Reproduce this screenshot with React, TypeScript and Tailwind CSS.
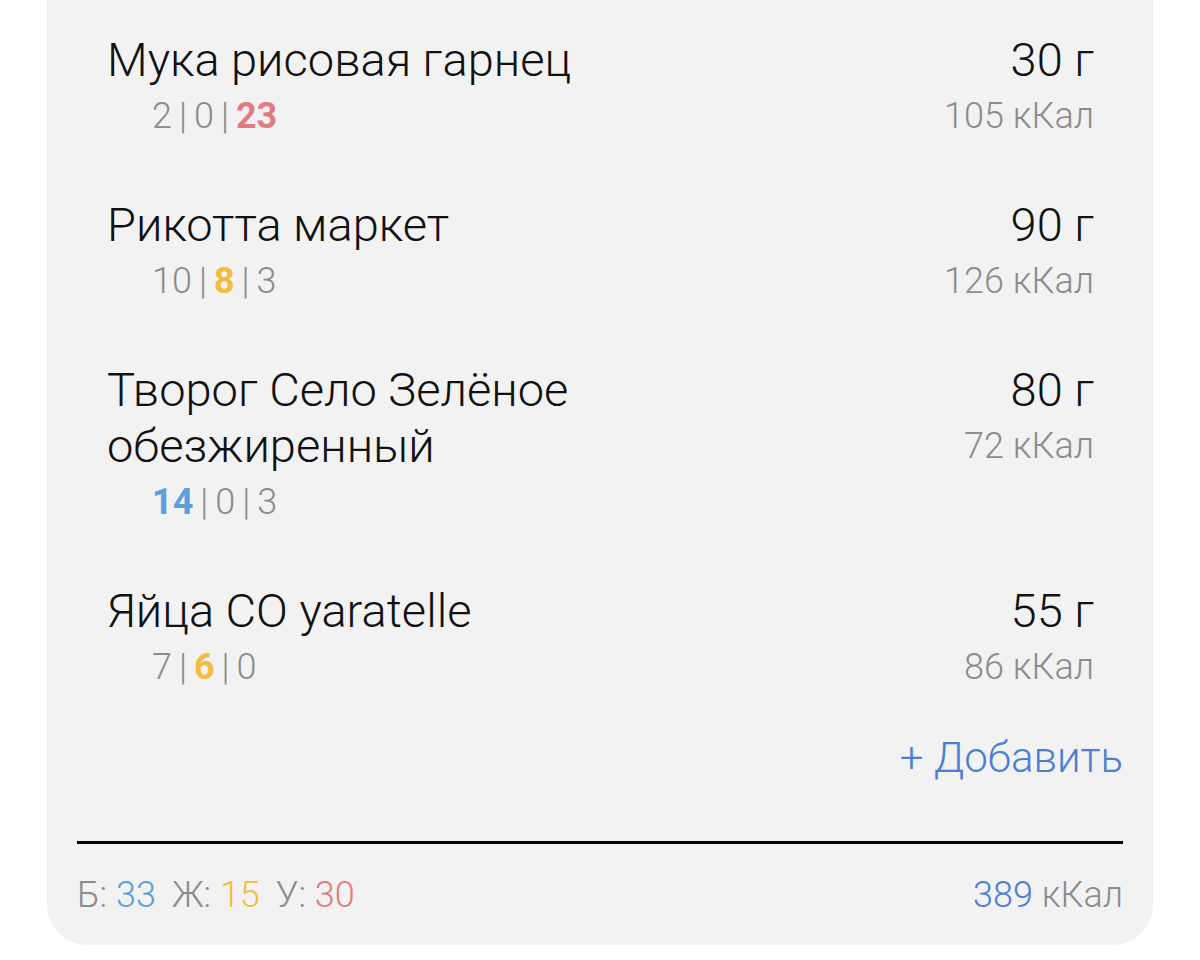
import React from 'react';

// ── Data ──────────────────────────────────────────────────────────────────────
type Macro = 'p' | 'f' | 'c';

interface Item {
  name: string[];
  grams: number;
  kcal: number;
  macros: [number, number, number];
  accent: Macro | null;
}

const ITEMS: Item[] = [
  { name: ['Мука рисовая гарнец'], grams: 30, kcal: 105, macros: [2, 0, 23], accent: 'c' },
  { name: ['Рикотта маркет'], grams: 90, kcal: 126, macros: [10, 8, 3], accent: 'f' },
  { name: ['Творог Село Зелёное', 'обезжиренный'], grams: 80, kcal: 72, macros: [14, 0, 3], accent: 'p' },
  { name: ['Яйца СО yaratelle'], grams: 55, kcal: 86, macros: [7, 6, 0], accent: 'f' },
];

const ACCENT: Record<Macro, string> = {
  p: 'text-[#5b9fdc]',
  f: 'text-[#f0bd3c]',
  c: 'text-[#e07c80]',
};

const KEYS: Macro[] = ['p', 'f', 'c'];

// ── Row ───────────────────────────────────────────────────────────────────────
const Row = ({ item }: { item: Item }) => (
  <div className="flex items-start justify-between pl-[30px] pr-[29px] mb-[52px]">
    <div>
      {item.name.map((line) => (
        <div key={line} className="text-[47px] leading-[56px] text-[#111]">
          {line}
        </div>
      ))}
      <div className="pl-[45px] text-[36px] leading-[57px] text-[#8c8c8c]">
        {item.macros.map((v, i) => (
          <React.Fragment key={i}>
            {i > 0 && <span className="mx-[7px]">|</span>}
            <span className={item.accent === KEYS[i] ? `font-bold ${ACCENT[KEYS[i]]}` : ''}>{v}</span>
          </React.Fragment>
        ))}
      </div>
    </div>
    <div className="text-right">
      <div className="text-[47px] leading-[56px] text-[#111]">{item.grams} г</div>
      <div className="text-[36px] leading-[57px] text-[#8c8c8c]">{item.kcal} кКал</div>
    </div>
  </div>
);

// ── Main ──────────────────────────────────────────────────────────────────────
export default function App() {
  return (
    <div
      className="min-h-screen bg-white px-[47px] font-light"
      style={{ fontFamily: 'Roboto, "Noto Sans", sans-serif' }}
    >
      <div className="bg-[#f2f2f2] rounded-b-[40px] px-[30px] pt-[32px] pb-[22px]">
        {ITEMS.map((it) => (
          <Row key={it.name[0]} item={it} />
        ))}

        <div className="-mt-[18px] flex justify-end text-[42px] leading-[56px] text-[#4a7fd6]">
          + Добавить
        </div>

        <div className="mt-[55px] h-[3px] bg-black" />

        <div className="mt-[23px] flex items-center justify-between text-[36px] leading-[56px] text-[#8c8c8c]">
          <div>
            Б: <span className="text-[#5b9fdc]">33</span>
            <span className="ml-[16px]">Ж: </span>
            <span className="text-[#f0bd3c]">15</span>
            <span className="ml-[16px]">У: </span>
            <span className="text-[#e07c80]">30</span>
          </div>
          <div>
            <span className="text-[#4a7fd6]">389</span> кКал
          </div>
        </div>
      </div>
    </div>
  );
}
